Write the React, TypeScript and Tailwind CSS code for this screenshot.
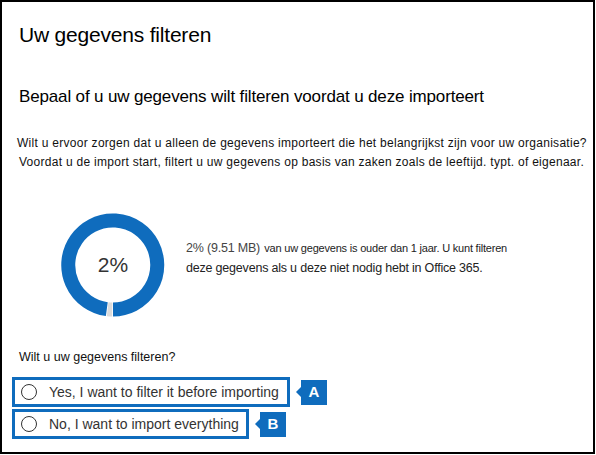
export default function App() {
  const blue = "#0f6cbd";
  return (
    <div
      className="w-[595px] h-[454px] border-2 border-black bg-white text-[#222] overflow-hidden"
      style={{ fontFamily: '"Liberation Sans", Arial, sans-serif' }}
    >
      {/* Header */}
      <h1 className="ml-[17px] mt-[20px] text-[21px] leading-[26px] tracking-[-0.2px] text-black">Uw gegevens filteren</h1>
      <h2 className="ml-[17px] mt-[37px] text-[17px] leading-[24px] tracking-[-0.15px] text-black">
        Bepaal of u uw gegevens wilt filteren voordat u deze importeert
      </h2>

      {/* Intro */}
      <div className="ml-[15px] mt-[25px] text-[12px] leading-[19px] tracking-[0.28px] text-[#111] whitespace-nowrap">
        <p>Wilt u ervoor zorgen dat u alleen de gegevens importeert die het belangrijkst zijn voor uw organisatie?</p>
        <p className="ml-[2px]">Voordat u de import start, filtert u uw gegevens op basis van zaken zoals de leeftijd. typt. of eigenaar.</p>
      </div>

      {/* Donut */}
      <div className="ml-[58px] mt-[40px] flex items-start gap-[20px]">
        <div className="relative w-[106px] h-[106px] shrink-0">
          <svg width="106" height="106" viewBox="0 0 106 106">
            <path d="M 46.8 97.1 A 44.5 44.5 0 1 1 53 97.5" fill="none" stroke={blue} strokeWidth="14" />
            <path d="M 52.2 97.5 A 44.5 44.5 0 0 1 47.6 97.2" fill="none" stroke="#dcdcdc" strokeWidth="14" />
          </svg>
          <div className="absolute inset-0 flex items-center justify-center text-[21px] text-[#333]">2%</div>
        </div>
        <div className="mt-[25px] text-[#222]">
          <p className="leading-[20px] tracking-[-0.2px]">
            <span className="text-[12.5px] text-[#444]">2% (9.51 MB)</span>{" "}
            <span className="text-[11px]">van uw gegevens is ouder dan 1 jaar. U kunt filteren</span>
          </p>
          <p className="text-[12.5px] leading-[20px] tracking-[-0.2px]">deze gegevens als u deze niet nodig hebt in Office 365.</p>
        </div>
      </div>

      {/* Question */}
      <p className="ml-[17px] mt-[30px] text-[12.5px] leading-[18px] text-[#111]">Wilt u uw gegevens filteren?</p>

      <div className="ml-[10px] mt-[11px] flex flex-col gap-[2px]">
        <Option label="Yes, I want to filter it before importing" tag="A" width="w-[278px]" blue={blue} />
        <Option label="No, I want to import everything" tag="B" width="w-[237px]" blue={blue} />
      </div>
    </div>
  );
}

function Option({ label, tag, width, blue }: { label: string; tag: string; width: string; blue: string }) {
  return (
    <div className="flex items-center">
      <div className={`${width} h-[30px] border-[3px] flex items-center pl-[6px]`} style={{ borderColor: blue }}>
        <span className="w-[16px] h-[16px] rounded-full border-[1.5px] border-[#333] shrink-0" />
        <span className="ml-[12px] text-[14px] text-[#333] whitespace-nowrap">{label}</span>
      </div>
      <div className="ml-[6px] flex items-center">
        <span
          className="w-0 h-0 border-y-[5px] border-y-transparent border-r-[5px]"
          style={{ borderRightColor: blue }}
        />
        <span
          className="w-[26px] h-[25px] flex items-center justify-center text-white text-[15px] font-bold"
          style={{ backgroundColor: blue }}
        >
          {tag}
        </span>
      </div>
    </div>
  );
}
